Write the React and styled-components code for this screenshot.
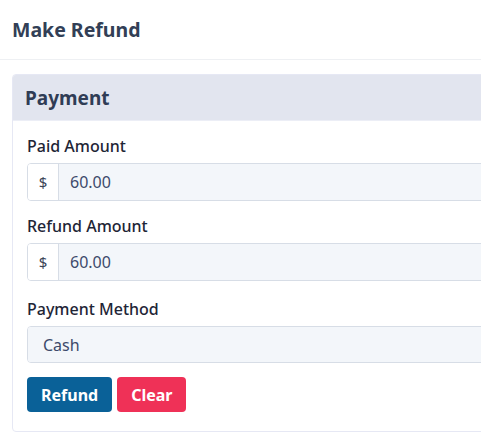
import styled, { createGlobalStyle } from "styled-components";

const GlobalStyle = createGlobalStyle`
  body {
    margin: 0;
    background: #fff;
    font-family: "Noto Sans", "Liberation Sans", sans-serif;
    overflow: hidden;
  }
  * {
    box-sizing: border-box;
  }
`;

const Page = styled.div`
  width: 100%;
  overflow: hidden;
`;

const Header = styled.div`
  height: 60px;
  display: flex;
  align-items: center;
  padding: 0 12px;
  border-bottom: 1px solid #eef0f3;
`;

const Title = styled.h1`
  margin: 0;
  font-size: 19.5px;
  font-weight: 700;
  color: #323f56;
`;

// card runs past the right edge of the window, as in the screenshot
const Card = styled.div`
  width: 620px;
  margin: 14px 0 0 12px;
  border: 1px solid #e6e8f4;
  border-radius: 4px;
  overflow: hidden;
`;

const CardHeader = styled.div`
  height: 46px;
  display: flex;
  align-items: center;
  padding: 0 12px;
  background: #e2e5ef;
  border-bottom: 1px solid #eceef6;
  font-size: 19px;
  font-weight: 700;
  color: #2f3c55;
`;

const CardBody = styled.div`
  padding: 14px 14px 19px;
`;

const Field = styled.div`
  margin-bottom: ${(p) => p.$gap || 14}px;
`;

const Label = styled.label`
  display: block;
  font-size: 16px;
  line-height: 22px;
  font-weight: 500;
  color: #1e2536;
  margin-bottom: 6px;
`;

const InputGroup = styled.div`
  display: flex;
  height: ${(p) => p.$h || 38}px;
  border: 1px solid #d7dde6;
  border-radius: 4px;
  overflow: hidden;
`;

const Addon = styled.span`
  width: 31px;
  display: flex;
  align-items: center;
  justify-content: center;
  background: #fff;
  border-right: 1px solid #d7dde6;
  font-size: 15px;
  color: #3a4456;
`;

const Value = styled.div`
  flex: 1;
  display: flex;
  align-items: center;
  padding: 0 ${(p) => (p.$plain ? 15 : 11)}px;
  background: #f3f6fa;
  font-size: 16px;
  color: #3d4a6b;
`;

const Actions = styled.div`
  display: flex;
  gap: 5px;
`;

const Button = styled.button`
  height: 35px;
  padding: 0 14px;
  border: none;
  border-radius: 4px;
  background: ${(p) => p.$bg};
  color: #fff;
  font-family: inherit;
  font-size: 16px;
  font-weight: 700;
`;

export default function App() {
  return (
    <Page>
      <GlobalStyle />
      <Header>
        <Title>Make Refund</Title>
      </Header>
      <Card>
        <CardHeader>Payment</CardHeader>
        <CardBody>
          <Field>
            <Label>Paid Amount</Label>
            <InputGroup>
              <Addon>$</Addon>
              <Value>60.00</Value>
            </InputGroup>
          </Field>
          <Field $gap={17}>
            <Label>Refund Amount</Label>
            <InputGroup>
              <Addon>$</Addon>
              <Value>60.00</Value>
            </InputGroup>
          </Field>
          <Field>
            <Label>Payment Method</Label>
            <InputGroup $h={37}>
              <Value $plain>Cash</Value>
            </InputGroup>
          </Field>
          <Actions>
            <Button $bg="#0a6198">Refund</Button>
            <Button $bg="#ef3157">Clear</Button>
          </Actions>
        </CardBody>
      </Card>
    </Page>
  );
}
